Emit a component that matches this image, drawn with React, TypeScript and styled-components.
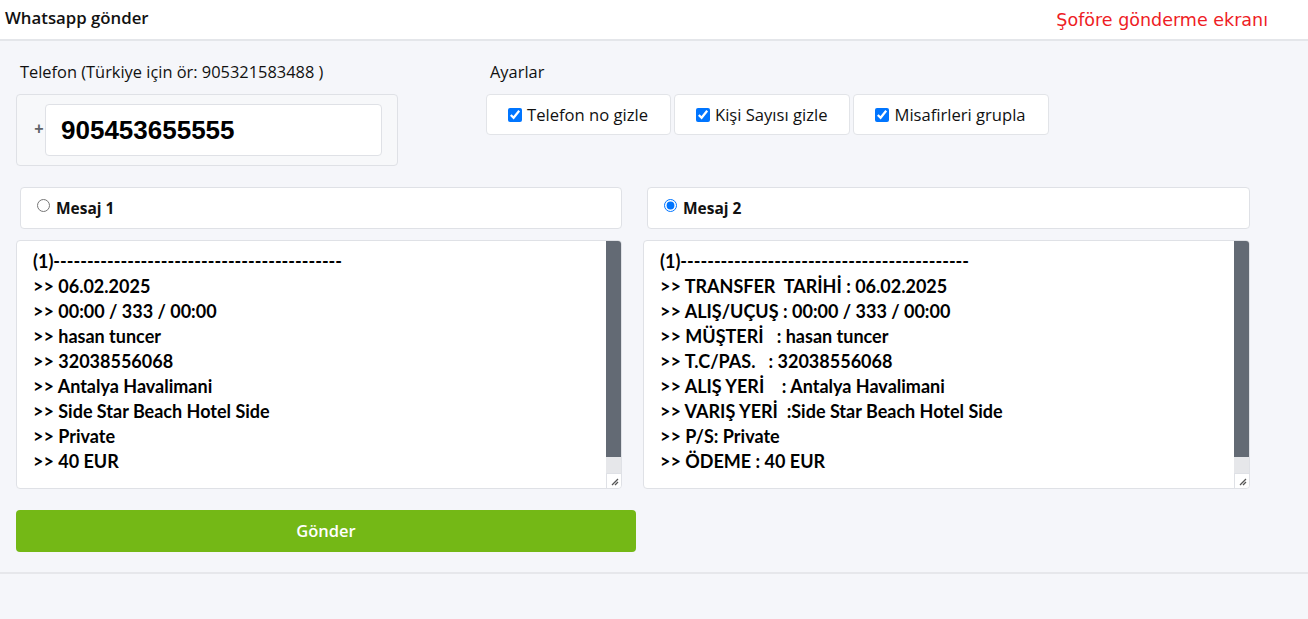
import React, { useState } from "react";
import styled, { createGlobalStyle } from "styled-components";

const Global = createGlobalStyle`
  html, body { margin: 0; padding: 0; background: #f5f6fa; }
  body { font-family: "Open Sans", Lato, sans-serif; color: #111; }
  * { box-sizing: border-box; }
`;

const Header = styled.header`
  height: 41px;
  background: #fff;
  border-bottom: 2px solid #e4e6ea;
  display: flex;
  align-items: center;
  justify-content: space-between;
  padding: 0 40px 0 5px;
`;

const Title = styled.h1`
  margin: 0 0 5px;
  font-size: 16.8px;
  font-weight: 600;
  color: #111;
`;

const Note = styled.span`
  font-family: "DejaVu Sans", sans-serif;
  font-size: 17.5px;
  color: #ee1c25;
  margin-top: 1px;
`;

const Main = styled.main`
  padding: 19px 58px 20px 16px;
  border-bottom: 2px solid #e6e7eb;
  display: flex;
  flex-direction: column;
`;

const TopRow = styled.div`
  display: flex;
  gap: 88px;
`;

const Col = styled.div<{ $w?: number }>`
  display: flex;
  flex-direction: column;
  ${(p) => (p.$w ? `width: ${p.$w}px;` : "")}
`;

const Label = styled.div`
  font-size: 16.4px;
  padding-left: 4px;
  height: 34px;
  line-height: 24px;
  color: #111;
  white-space: nowrap;
`;

const PhoneBox = styled.div`
  display: flex;
  align-items: center;
  padding: 9px 15px 9px 16px;
  border: 1px solid #dfe1e6;
  border-radius: 4px;
  background: #f7f8fa;
`;

const Plus = styled.span`
  font-family: "Liberation Sans", Arial, sans-serif;
  font-size: 16px;
  font-weight: 700;
  color: #5f6368;
  width: 13px;
  text-align: center;
  margin-top: -3px;
`;

const PhoneInput = styled.input`
  width: 337px;
  height: 52px;
  border: 1px solid #dfe1e6;
  border-radius: 4px;
  background: #fff;
  padding: 0 15px;
  font-family: "Liberation Sans", Arial, sans-serif;
  font-weight: 700;
  font-size: 26px;
  color: #000;
  outline: none;
`;

const Options = styled.div`
  display: flex;
  gap: 3px;
`;

const OptionBox = styled.label`
  height: 41px;
  display: flex;
  align-items: center;
  gap: 4px;
  padding: 0 22px 0 21px;
  background: #fff;
  border: 1px solid #e2e4e8;
  border-radius: 4px;
  font-size: 16.6px;
  color: #111;
  input { margin: 0 1px 0 0; width: 14px; height: 14px; }
`;

const Grid = styled.div`
  display: grid;
  grid-template-columns: 606px 607px;
  column-gap: 21px;
  margin-top: 21px;
`;

const MsgCard = styled.label`
  margin-left: 4px;
  height: 42px;
  display: flex;
  align-items: center;
  gap: 4px;
  padding-left: 16px;
  background: #fff;
  border: 1px solid #dfe1e6;
  border-radius: 4px;
  font-size: 15.5px;
  font-weight: 700;
  input { margin: -6px 2px 0 0; width: 13px; height: 13px; }
`;

const AreaBox = styled.div`
  margin-top: 11px;
  height: 249px;
  display: flex;
  border: 1px solid #dfe1e6;
  border-radius: 4px;
  background: #fff;
  overflow: hidden;
`;

const Area = styled.textarea`
  flex: 1;
  min-width: 0;
  border: none;
  background: transparent;
  padding: 8px 16px 4px;
  font-family: Lato, sans-serif;
  font-weight: 700;
  font-size: 18px;
  line-height: 25px;
  color: #000;
  resize: none;
  outline: none;
  overflow: hidden;
`;

const Rail = styled.div`
  width: 15px;
  display: flex;
  flex-direction: column;
  background: #e6e7ea;
`;

const Thumb = styled.div`
  height: 216px;
  background: #636a74;
`;

const Track = styled.div`
  flex: 1;
`;

const Corner = styled.div`
  height: 15px;
  background: #fff;
  border-top: 1px solid #dfe1e6;
  border-left: 1px solid #dfe1e6;
  display: flex;
  align-items: flex-end;
  justify-content: flex-end;
  padding: 0 2px 2px 0;
`;

const SendButton = styled.button`
  margin-top: 21px;
  width: 620px;
  height: 42px;
  background: #74b816;
  border: none;
  border-radius: 4px;
  color: #fff;
  font-family: "Open Sans", sans-serif;
  font-weight: 600;
  font-size: 16.5px;
  padding-bottom: 3px;
  cursor: pointer;
`;

const Grip = () => (
  <svg width="9" height="9" viewBox="0 0 9 9">
    <path d="M8 2 L2 8 M8 5 L5 8" stroke="#555" strokeWidth="1.3" />
  </svg>
);

const dashes = "-".repeat(43);

const msg1 = `(1)${dashes}
>> 06.02.2025
>> 00:00 / 333 / 00:00
>> hasan tuncer
>> 32038556068
>> Antalya Havalimani
>> Side Star Beach Hotel Side
>> Private
>> 40 EUR`;

const msg2 = `(1)${dashes}
>> TRANSFER  TARİHİ : 06.02.2025
>> ALIŞ/UÇUŞ : 00:00 / 333 / 00:00
>> MÜŞTERİ   : hasan tuncer
>> T.C/PAS.   : 32038556068
>> ALIŞ YERİ    : Antalya Havalimani
>> VARIŞ YERİ  :Side Star Beach Hotel Side
>> P/S: Private
>> ÖDEME : 40 EUR`;

const Message = ({ value }: { value: string }) => (
  <AreaBox>
    <Area defaultValue={value} />
    <Rail>
      <Thumb />
      <Track />
      <Corner>
        <Grip />
      </Corner>
    </Rail>
  </AreaBox>
);

export default function App() {
  const [sel, setSel] = useState(2);
  return (
    <>
      <Global />
      <Header>
        <Title>Whatsapp gönder</Title>
        <Note>Şoföre gönderme ekranı</Note>
      </Header>
      <Main>
        <TopRow>
          <Col $w={382}>
            <Label>Telefon (Türkiye için ör: 905321583488 )</Label>
            <PhoneBox>
              <Plus>+</Plus>
              <PhoneInput defaultValue="905453655555" />
            </PhoneBox>
          </Col>
          <Col>
            <Label>Ayarlar</Label>
            <Options>
              <OptionBox>
                <input type="checkbox" defaultChecked />
                Telefon no gizle
              </OptionBox>
              <OptionBox>
                <input type="checkbox" defaultChecked />
                Kişi Sayısı gizle
              </OptionBox>
              <OptionBox>
                <input type="checkbox" defaultChecked />
                Misafirleri grupla
              </OptionBox>
            </Options>
          </Col>
        </TopRow>
        <Grid>
          <MsgCard>
            <input type="radio" name="m" checked={sel === 1} onChange={() => setSel(1)} />
            Mesaj 1
          </MsgCard>
          <MsgCard>
            <input type="radio" name="m" checked={sel === 2} onChange={() => setSel(2)} />
            Mesaj 2
          </MsgCard>
          <Message value={msg1} />
          <Message value={msg2} />
        </Grid>
        <SendButton>Gönder</SendButton>
      </Main>
    </>
  );
}
